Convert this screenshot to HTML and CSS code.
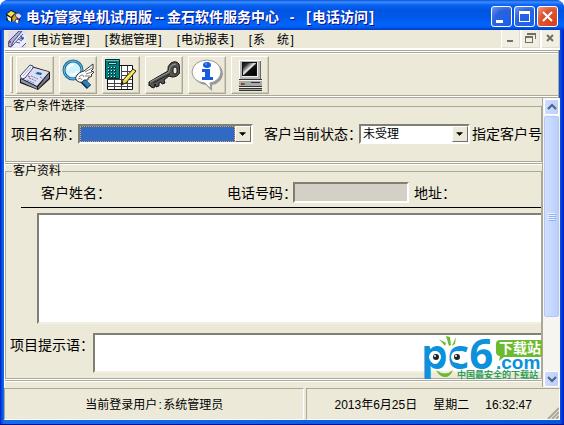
FILE: index.html
```
<!DOCTYPE html>
<html lang="zh-CN">
<head>
	<meta charset="utf-8">
	<title>电访管家单机试用版--金石软件服务中心 - [电话访问]</title>
	<link rel="stylesheet" href="styles.css">
</head>
<body>
<div class="window">
	<header class="titlebar">
		<svg class="app-icon" width="16" height="16" viewBox="0 0 16 16">
			<path d="M0 5L5 1l6 3 4 1v3l-3 7-3-3-1-2-3 3-5-2 1-3z" fill="#111"/>
			<path d="M1 5l4-3 4 2-4 4z" fill="#f5df55"/>
			<path d="M1 7l4 2v4l-3-2z" fill="#fff8c0"/>
			<path d="M6 9l3-4 2 5-4 3z" fill="#c9a71a"/>
			<path d="M9 5l4-1 3 3-3 3-3-2z" fill="#d7d5f4" stroke="#554a85"/>
			<path d="M10 10l3 1-1 4-3-2z" fill="#fff" stroke="#554a85"/>
		</svg>
		<h1><span>电访管家单机试用版</span><span class="dash">--</span><span>金石软件服务中心</span><span class="sep">-</span><span class="bk r">[</span><span>电话访问</span><span class="bk">]</span></h1>
		<div class="caption-buttons">
			<button type="button" aria-label="最小化"><svg width="19" height="19"><path d="M4 13h7v3H4z" fill="#fff"/></svg></button>
			<button type="button" aria-label="最大化"><svg width="19" height="19"><path d="M4 4h11v11H4zM5 7v7h9V7z" fill="#fff" fill-rule="evenodd"/></svg></button>
			<button type="button" class="close" aria-label="关闭"><svg width="19" height="19"><path d="M5 5l9 9M14 5l-9 9" stroke="#fff" stroke-width="2"/></svg></button>
		</div>
	</header>

	<nav class="menubar">
		<svg class="doc-icon" width="18" height="17" viewBox="0 0 18 17">
			<path d="M0 0h18v17H0z" fill="#dcdcea"/>
			<path d="M1 10L11 0h3L5 11l-2 5-3-1z" fill="#aab0d8" stroke="#45477d"/>
			<path d="M7 10l8-8 3 2v8l-8 5-5-1z" fill="#ececfa"/>
			<path d="M4 15L15 3M12 5l4 2M10 8l4 2M8 11l4 1M14 16l4-4" stroke="#4d568d"/>
			<path d="M13 6l3 1-1 2-3-1z" fill="#235ab0"/>
			<path d="M1 10h2v2H1z" fill="#d43636"/>
		</svg>
		<ul>
			<li><a href="#"><span class="bk r">[</span>电访管理<span class="bk">]</span></a></li>
			<li><a href="#"><span class="bk r">[</span>数据管理<span class="bk">]</span></a></li>
			<li><a href="#"><span class="bk r">[</span>电访报表<span class="bk">]</span></a></li>
			<li><a href="#"><span class="bk r">[</span>系　统<span class="bk">]</span></a></li>
		</ul>
		<div class="mdi-buttons">
			<button type="button" aria-label="最小化子窗口"><svg width="17" height="17"><path d="M5 10h6v2H5z" fill="#716f64"/></svg></button>
			<button type="button" aria-label="还原子窗口"><svg width="17" height="17"><path d="M5 3h9v6h-1V5H5zM3 6h8v7H3zM4 8v4h6V8z" fill="#716f64" fill-rule="evenodd"/></svg></button>
			<button type="button" aria-label="关闭子窗口"><svg width="17" height="17"><path d="M5 5l6 6M11 5l-6 6" stroke="#716f64" stroke-width="2"/></svg></button>
		</div>
	</nav>

	<div class="toolbar">
		<span class="grip"></span>
		<button type="button" aria-label="电话访问">
			<svg width="32" height="32" viewBox="0 0 32 32">
				<path d="M1 20L12 7l17 5 2 1v7L19 31 1 24z" fill="#111"/>
				<path d="M2 19L12 8l18 5-12 14z" fill="#dcdff2"/>
				<path d="M2 20l16 8v2L2 23z" fill="#8d93b3"/>
				<path d="M19 28l11-14v5L19 30z" fill="#74788d"/>
				<path d="M1 17L11 6l3 1v2L6 19l-3 1z" fill="#f4f4ff" stroke="#3c4074"/>
				<path d="M4 17l8-9" stroke="#a1a6d0"/>
				<path d="M17 12l7 2-2 3-7-2z" fill="#b7d5f4"/>
				<path d="M18 13l5 1-1 2-5-1z" fill="#2457a9"/>
				<path d="M12 17l7 3M10 19l7 3M8 21l7 3M21 18l4 2" stroke="#7178b2" stroke-dasharray="2 1"/>
				<path d="M9 17l2 1" stroke="#d22"/>
			</svg>
		</button>
		<button type="button" aria-label="查询">
			<svg width="32" height="32" viewBox="0 0 32 32">
				<path d="M18 19l9 9" stroke="#062a4a" stroke-width="6"/>
				<path d="M20 20l7 7" stroke="#2e7fc3" stroke-width="4"/>
				<circle cx="11" cy="11" r="9" fill="#cdf4ff" stroke="#1d6d9c" stroke-width="3"/>
				<circle cx="11" cy="11" r="9" fill="none" stroke="#79bee5"/>
				<path d="M6 10q2-5 6-4M8 15q5 2 7-3" fill="none" stroke="#fff" stroke-width="2"/>
				<path d="M15 22q-3-3 0-6 2-3 7-4l9-7v5l-2 2 3 1-3 3 1 1-4 2v2h-4q-2 4-7 1z" fill="#fff" stroke="#333"/>
				<path d="M17 18q4-4 5 0M23 13l7-4M24 15l6-2M23 17h5M16 20q3-2 4 1" fill="none" stroke="#777"/>
			</svg>
		</button>
		<button type="button" aria-label="登记">
			<svg width="32" height="32" viewBox="0 0 32 32">
				<path d="M2.500 6.500h25v24h-25z" fill="#fff" stroke="#111"/>
				<path d="M3 20.500h24M3 24.500h24M3 27.500h24M17 12.500h10M17 16.500h10M9.500 18v12M16.500 7v23M22.500 7v23" stroke="#444"/>
				<path d="M.5.500h14v19H.5z" fill="#008080" stroke="#002f32"/>
				<path d="M1 1.500h13" stroke="#54c9c6"/>
				<path d="M3.500 3.500h8v2h-8z" fill="#aadbd8" stroke="#003e3e"/>
				<path d="M3 9h9M3 12h9M3 15h9M3 18h9" stroke="#003b3b" stroke-width="2" stroke-dasharray="2 1"/>
				<path d="M3 8.500h9M3 11.500h9M3 14.500h9M3 17.500h9" stroke="#d1f7f3" stroke-dasharray="1 2"/>
				<path d="M16 26l2-5L28 10l3 2-10 12z" fill="#f1dd3c" stroke="#222"/>
				<path d="M20 21l9-9" stroke="#fff48a"/>
				<path d="M16 26l1-3 2 1z" fill="#111"/>
			</svg>
		</button>
		<button type="button" aria-label="密码">
			<svg width="32" height="32" viewBox="0 0 32 32">
				<path d="M1 23L20 12q-1-5 3-8 5-3 8 1l1 8q-2 5-8 5l-3-1-5 4 1 3-3 1-1-2-2 1v3l-3 1-1-3-1 4-3-1-1-2-1 1z" fill="#555" stroke="#111"/>
				<path d="M2 23l19-10q0-5 3-7l4-1" fill="none" stroke="#999"/>
				<path d="M5 24l17-9" stroke="#222"/>
				<rect x="25" y="8" width="4" height="7" rx="2" fill="#ece9d8" stroke="#111"/>
			</svg>
		</button>
		<button type="button" aria-label="信息">
			<svg width="32" height="32" viewBox="0 0 32 32">
				<path d="M17 3q14 0 15 12-1 9-11 11v6l-6-6Q3 24 3 15 4 4 17 3" fill="#999"/>
				<path d="M16 1q13 1 14 12-1 9-11 11l1 6-6-6Q2 23 1 13 2 2 16 1z" fill="#fff" stroke="#999"/>
				<ellipse cx="16" cy="6" rx="4" ry="3" fill="#175ce0"/>
				<path d="M11 10h8v8h3v3H11v-3h3v-5h-3z" fill="#175ce0"/>
				<path d="M14 5h2" stroke="#8cbcff"/>
			</svg>
		</button>
		<button type="button" aria-label="系统">
			<svg width="32" height="32" viewBox="0 0 32 32">
				<defs>
					<linearGradient id="screen" x2="1" y2="1"><stop offset="0" stop-color="#111"/><stop offset=".2" stop-color="#333"/><stop offset=".48" stop-color="#eee"/><stop offset=".56" stop-color="#111"/><stop offset="1" stop-color="#000"/></linearGradient>
				</defs>
				<path d="M5 1h21l1 1v18H5z" fill="#b8b8b8"/>
				<path d="M5 1h22v1H6v18H5z" fill="#fff"/>
				<path d="M26 2h1v18h-1z" fill="#666"/>
				<path d="M8 3h16v15H8z" fill="#eee"/>
				<path d="M8 3h15v14H8z" fill="#111"/>
				<path d="M9 4h13v12H9z" fill="url(#screen)"/>
				<path d="M5 20h23v12H5z" fill="#a9a9a9"/>
				<path d="M5 20h23v1H5zM17 23h9v1h-9zM5 27h23v1H5zM5 29h23v1H5zM5 31h23v1H5z" fill="#333"/>
				<path d="M5 21h23v1H5zM5 28h23v1H5z" fill="#eee"/>
				<path d="M7 24h2v2H7z" fill="#e01414"/><path d="M9 24h2v2H9z" fill="#16a523"/>
			</svg>
		</button>
	</div>

	<main class="workspace">
		<form class="form">
			<fieldset class="group filter">
				<legend>客户条件选择</legend>
				<div class="filter-row">
					<label for="project">项目名称：</label>
					<span class="combo active">
						<select id="project"><option></option></select>
						<svg class="arrow" width="16" height="16" viewBox="0 0 16 16"><path d="M4 6h7v1h-1v1H9v1H8v1H7V9H6V8H5V7H4z"/></svg>
					</span>
					<label for="state">客户当前状态：</label>
					<span class="combo">
						<select id="state"><option>未受理</option></select>
						<svg class="arrow" width="16" height="16" viewBox="0 0 16 16"><path d="M4 6h7v1h-1v1H9v1H8v1H7V9H6V8H5V7H4z"/></svg>
					</span>
					<span class="text">指定客户号</span>
				</div>
			</fieldset>
			<fieldset class="group detail">
				<legend>客户资料</legend>
				<div class="detail-row">
					<span class="text">客户姓名：</span>
					<label for="phone">电话号码：</label>
					<input id="phone" type="text" disabled>
					<span class="text">地址：</span>
				</div>
				<hr>
				<textarea class="record" aria-label="客户资料"></textarea>
				<div class="prompt-row">
					<label for="prompt">项目提示语：</label>
					<textarea id="prompt"></textarea>
				</div>
			</fieldset>
			<div class="watermark">
				<svg width="122" height="48" viewBox="0 0 122 48">
					<path d="M18 6l7 4-1 3zM25 3l4 1 1 8-2 1zM35 4l-1 7-3 2z" fill="#6dba2e"/>
					<path d="M15 37q9 7 17 0-3 8-9 7-5-1-8-7" fill="#6dba2e"/>
					<path d="M75 11q0-4 4-4h39q4 0 4 4v9q0 4-4 4H83l-5 4 1-5q-4 0-4-4z" fill="#6dba2e"/>
				</svg>
				<span class="brand">pc6</span>
				<span class="dotcom">.com</span>
				<span class="badge">下载站</span>
				<span class="slogan">中国最安全的下载站</span>
				<svg width="122" height="48" viewBox="0 0 122 48">
					<circle cx="14" cy="24" r="6" fill="#fff"/><circle cx="15" cy="24" r="3" fill="#222"/><circle cx="14" cy="23" r="1" fill="#fff"/>
					<circle cx="36" cy="24" r="6" fill="#fff"/><circle cx="36" cy="24" r="3" fill="#222"/><circle cx="35" cy="23" r="1" fill="#fff"/>
				</svg>
			</div>
		</form>
		<div class="scrollbar">
			<button type="button" aria-label="向上滚动"><svg width="13" height="14"><path d="M3 9l4-4 4 4" fill="none" stroke="#4d6185" stroke-width="2"/></svg></button>
			<div class="track">
				<div class="thumb"><svg width="8" height="8" shape-rendering="crispEdges"><path d="M0 0h7v1H0zM0 2h7v1H0zM0 4h7v1H0zM0 6h7v1H0z" fill="#eef4fe"/><path d="M1 1h7v1H1zM1 3h7v1H1zM1 5h7v1H1zM1 7h7v1H1z" fill="#8cb0f8"/></svg></div>
			</div>
			<button type="button" aria-label="向下滚动"><svg width="13" height="14"><path d="M3 5l4 4 4-4" fill="none" stroke="#4d6185" stroke-width="2"/></svg></button>
		</div>
	</main>

	<footer class="statusbar">
		<div class="panel user">当前登录用户<span class="bk">:</span>系统管理员</div>
		<div class="panel clock">
			<span>2013年6月25日</span>
			<span>星期二</span>
			<span>16:32:47</span>
			<svg class="sizer" width="12" height="12"><path d="M1 12L12 1M5 12l7-7M9 12l3-3" stroke="#aca899" stroke-width="2"/></svg>
		</div>
	</footer>
</div>
</body>
</html>
```
FILE: styles.css
```
* {
	box-sizing: border-box;
}
body {
	margin: 0;
	background: #fff;
	color: #000;
	font: 12px/16px "Liberation Sans", "Noto Sans CJK SC", sans-serif;
}
button, input, select, textarea {
	margin: 0;
	padding: 0;
	font: inherit;
	border-radius: 0;
}
svg {
	display: block;
}

.window {
	display: flex;
	flex-direction: column;
	height: 100vh;
	padding: 0 4px 4px;
	border-radius: 8px 8px 0 0;
	background: linear-gradient(90deg, #0019cf, #0855dd 2px, #166aee 4px, #0855dd calc(100% - 4px), #0019cf);
	border-bottom: 1px solid #00138c;
	overflow: hidden;
}

/* title bar */
.titlebar {
	display: flex;
	align-items: center;
	flex: none;
	height: 30px;
	margin: 0 -4px;
	padding: 3px 6px 0 6px;
	background: linear-gradient(#0a52d8, #3a8dff 2px, #0a62f0 5px, #0054e3 10px, #0058ea 18px, #0066ff 25px, #005bf0 27px, #003bc5);
}
.titlebar h1 {
	display: flex;
	flex: 1;
	margin: 0 0 0 4px;
	color: #fff;
	font-size: 14px;
	line-height: 20px;
	font-weight: bold;
	white-space: nowrap;
	text-shadow: 1px 1px #0f1089;
}
.dash {
	width: 15px;
	text-align: center;
}
.sep {
	width: 26px;
	text-align: center;
}
.bk {
	display: inline-block;
	width: 6px;
	text-align: center;
}
.bk.r {
	text-align: right;
	padding-right: 1px;
}
.titlebar .bk {
	width: 7px;
}
.caption-buttons {
	display: flex;
	gap: 2px;
}
.caption-buttons button {
	width: 21px;
	height: 21px;
	border: 1px solid #fff;
	border-radius: 3px;
	background: radial-gradient(circle at 80% 85%, #1b61ee, #2b62dd 60%, #6f9bf4);
}
.caption-buttons .close {
	background: radial-gradient(circle at 80% 85%, #d9421b, #dd5431 60%, #f0a28d);
}

/* menu */
.menubar {
	display: flex;
	align-items: center;
	flex: none;
	height: 20px;
	padding-left: 4px;
	background: #ece9d8;
	border-bottom: 2px solid #fff;
}
.menubar ul {
	display: flex;
	flex: 1;
	gap: 12px;
	margin: 0;
	padding: 2px 0 0 5px;
	list-style: none;
}
.menubar a {
	display: block;
	color: #000;
	text-decoration: none;
	white-space: nowrap;
}
.mdi-buttons {
	display: flex;
	gap: 2px;
	padding-left: 1px;
	background: #fff;
}
.mdi-buttons button {
	width: 18px;
	height: 18px;
	border: 0;
	background: #f1efe4;
	border-right: 1px solid #e0ddcf;
	border-bottom: 1px solid #e0ddcf;
}

/* tool bar */
.toolbar {
	display: flex;
	align-items: center;
	flex: none;
	gap: 5px;
	height: 48px;
	margin-right: 1px;
	padding: 1px 4px 0 5px;
	background: #ece9d8;
	border: 1px solid #aca899;
	border-left-color: #fff;
	box-shadow: inset 0 1px #fff, inset 0 2px #aca899, inset 0 3px #fff, inset 0 -1px #fff, inset 0 -2px #aca899;
}
.grip {
	width: 3px;
	height: 37px;
	margin-right: -2px;
	border: 1px solid #aca899;
	border-left-color: #fff;
	border-top-color: #fff;
}
.toolbar button {
	display: grid;
	place-items: center;
	width: 38px;
	height: 38px;
	border: 1px solid;
	border-color: #fff #aca899 #aca899 #fff;
	background: #ece9d8;
	box-shadow: inset -1px -1px #d0ccba;
}

/* form */
.workspace {
	display: flex;
	flex: 1;
	min-height: 0;
	background: #ece9d8;
	border-left: 1px solid #fff;
}
.form {
	position: relative;
	display: flex;
	flex-direction: column;
	flex: 1;
	min-width: 0;
	padding-bottom: 8px;
	border-right: 1px solid #aca899;
	overflow: hidden;
}
.group {
	min-width: 0;
	margin: 0;
	padding: 0;
	border: 1px solid #aca899;
	box-shadow: 0 1px #fff, 0 2px #aca899, 0 3px #fff;
}
.group legend {
	margin-left: 6px;
	padding: 0 1px;
	line-height: 16px;
}
.group label, .text {
	font-size: 14px;
	line-height: 20px;
	white-space: nowrap;
}
.filter {
	height: 64px;
}
.filter-row {
	display: grid;
	grid-template-columns: 67px 175px 106px 111px 1fr;
	align-items: center;
	padding: 10px 0 0 5px;
}
.filter-row label:nth-of-type(2) {
	padding-left: 11px;
}
.filter-row .text {
	padding-left: 2px;
}
.combo {
	position: relative;
	height: 20px;
	border: 2px solid;
	border-color: #817e73 #fff #fff #817e73;
	background: #fff;
}
.combo select {
	display: block;
	width: 100%;
	height: 16px;
	padding-left: 2px;
	border: 0;
	appearance: none;
	background: #fff;
	color: #000;
	line-height: 16px;
}
.combo.active select {
	background: #316ac5;
	border: 1px dotted #eaa53a;
}
.combo.active {
	padding-right: 16px;
}
.arrow {
	position: absolute;
	top: 0;
	right: 0;
	background: #ece9d8;
	border: 1px solid;
	border-color: #fff #716f64 #716f64 #fff;
	pointer-events: none;
}

.detail {
	display: flex;
	flex-direction: column;
	flex: 1;
	margin-top: 1px;
}
.detail-row {
	display: grid;
	grid-template-columns: 186px 66px 116px 1fr;
	align-items: center;
	padding: 3px 0 4px 35px;
}
.detail-row .text:last-child {
	padding-left: 5px;
}
.detail-row input {
	width: 100%;
	height: 21px;
	border: 2px solid;
	border-color: #817e73 #fff #fff #817e73;
	background: #d4d0c8;
}
hr {
	margin: 0 0 5px 15px;
	border: 0;
	border-top: 1px solid #000;
}
textarea {
	display: block;
	resize: none;
	border: 2px solid;
	border-color: #817e73 #fff #f1efe2 #817e73;
	border-right: 0;
	background: #fff;
}
.record {
	width: calc(100% - 31px);
	height: 111px;
	margin-left: 31px;
}
.prompt-row {
	display: grid;
	grid-template-columns: 83px 1fr;
	padding: 9px 0 4px 4px;
}
.prompt-row label {
	padding-top: 2px;
}
.prompt-row textarea {
	width: 100%;
	height: 40px;
}

/* site mark over the form corner */
.watermark {
	position: absolute;
	right: -1px;
	bottom: 6px;
	width: 122px;
	height: 48px;
	white-space: nowrap;
}
.watermark > * {
	position: absolute;
	top: 0;
	left: 0;
}
.watermark .brand {
	color: #0c91dc;
	font: bold 42px/40px "Open Sans", sans-serif;
}
.watermark .dotcom {
	top: 23px;
	left: 75px;
	color: #0c91dc;
	font: bold 19px/14px "Liberation Sans", sans-serif;
}
.watermark .badge {
	top: 7px;
	left: 78px;
	color: #fff;
	font-weight: bold;
	font-size: 14px;
}
.watermark .slogan {
	top: 37px;
	left: 36px;
	color: #2fa05c;
	font-size: 9px;
	font-weight: bold;
	line-height: 10px;
}

/* scroll bar */
.scrollbar {
	display: flex;
	flex-direction: column;
	flex: none;
	width: 17px;
	padding: 1px 1px 0;
	background: #f6f5f0;
}
.scrollbar button {
	width: 15px;
	height: 16px;
	border: 1px solid #fff;
	border-radius: 2px;
	background: linear-gradient(90deg, #cfddff, #b9cffb);
}
.track {
	flex: 1;
	padding-top: 1px;
}
.thumb {
	display: grid;
	place-items: center;
	width: 15px;
	height: 79%;
	border: 1px solid #b4c8f6;
	border-radius: 2px;
	background: linear-gradient(90deg, #d2e0ff, #b9cffb);
}

/* status bar */
.statusbar {
	display: grid;
	grid-template-columns: 301fr 254fr;
	flex: none;
	gap: 2px;
	height: 33px;
	padding-top: 1px;
	background: #ece9d8;
}
.panel {
	display: flex;
	align-items: center;
	justify-content: center;
	padding-top: 2px;
	border: 1px solid;
	border-color: #aca899 #fff #fff #aca899;
	white-space: nowrap;
}
.clock {
	position: relative;
	gap: 16px;
}
.sizer {
	position: absolute;
	right: 0;
	bottom: 0;
}
```
